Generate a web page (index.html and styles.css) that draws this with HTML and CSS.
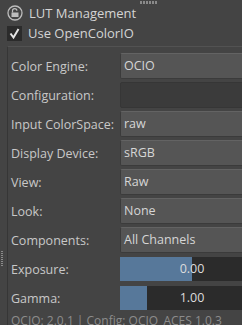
FILE: index.html
```html
<!DOCTYPE html>
<html lang="en">
<head>
    <meta charset="UTF-8">
    <meta name="viewport" content="width=device-width, initial-scale=1.0">
    <title>LUT Management</title>
    <link rel="stylesheet" href="styles.css">
</head>
<body>
    <div class="panel">
        <div class="grip-top"><span></span></div>

        <div class="section-title">
            <svg class="lock" width="16" height="16" viewBox="0 0 16 16">
                <circle cx="8" cy="8" r="7" fill="none" stroke="#bdbdbd" stroke-width="1.3"/>
                <path d="M5.5 7.5 V5.8 A2.2 2.2 0 0 1 9.9 5.8" fill="none" stroke="#bdbdbd" stroke-width="1.2"/>
                <rect x="4.5" y="7.5" width="7" height="4.5" fill="#bdbdbd"/>
            </svg>
            <span>LUT Management</span>
        </div>

        <label class="check-row">
            <span class="checkbox">
                <svg width="15" height="15" viewBox="0 0 15 15">
                    <path d="M3.5 7.5 L6.5 11.5 L11.5 3" fill="none" stroke="#e6e6e6" stroke-width="2"/>
                </svg>
            </span>
            <span>Use OpenColorIO</span>
        </label>

        <div class="frame">
            <div class="grip-side"></div>

            <div class="row">
                <span class="label">Color Engine:</span>
                <div class="field">OCIO</div>
            </div>
            <div class="row">
                <span class="label">Configuration:</span>
                <div class="field empty"></div>
            </div>
            <div class="row">
                <span class="label">Input ColorSpace:</span>
                <div class="field">raw</div>
            </div>
            <div class="row">
                <span class="label">Display Device:</span>
                <div class="field">sRGB</div>
            </div>
            <div class="row">
                <span class="label">View:</span>
                <div class="field">Raw</div>
            </div>
            <div class="row">
                <span class="label">Look:</span>
                <div class="field">None</div>
            </div>
            <div class="row">
                <span class="label">Components:</span>
                <div class="field">All Channels</div>
            </div>
            <div class="row">
                <span class="label">Exposure:</span>
                <div class="slider">
                    <div class="fill" style="width: 50%"></div>
                    <span class="value">0.00</span>
                </div>
            </div>
            <div class="row">
                <span class="label">Gamma:</span>
                <div class="slider">
                    <div class="fill" style="width: 19%"></div>
                    <span class="value">1.00</span>
                </div>
            </div>

            <div class="footer">OCIO: 2.0.1 | Config: OCIO_ACES 1.0.3</div>
        </div>
    </div>
</body>
</html>
```

FILE: styles.css
```css
* {
    margin: 0;
    padding: 0;
    box-sizing: border-box;
}

body {
    font-family: 'Open Sans', sans-serif;
    font-size: 12.5px;
    background: #444444;
    color: #c8c8c8;
    overflow: hidden;
}

.panel {
    display: flex;
    flex-direction: column;
    width: 242px;
    height: 325px;
    overflow: hidden;
}

.grip-top {
    height: 6px;
    padding-left: 140px;
    padding-top: 1px;
}

.grip-top span {
    display: block;
    width: 18px;
    height: 3px;
    background: repeating-linear-gradient(90deg, #8a8a8a 0 2px, transparent 2px 3px);
}

.section-title {
    display: flex;
    align-items: center;
    gap: 6px;
    height: 18px;
    padding-left: 7px;
    font-size: 13px;
    color: #d4d4d4;
}

.check-row {
    display: flex;
    align-items: center;
    gap: 6px;
    height: 19px;
    margin-top: 2px;
    padding-left: 7px;
    font-size: 13px;
    color: #d4d4d4;
}

.checkbox {
    display: flex;
    width: 15px;
    height: 15px;
    background: #2b2b2b;
}

.frame {
    position: relative;
    display: flex;
    flex-direction: column;
    gap: 3px;
    margin-top: 4px;
    margin-left: 7px;
    padding-top: 6px;
    padding-left: 3px;
    border-top: 1px solid #525252;
    border-left: 1px solid #363636;
    flex: 1;
}

.grip-side {
    position: absolute;
    left: -7px;
    top: 204px;
    width: 2px;
    height: 16px;
    background: repeating-linear-gradient(180deg, #8a8a8a 0 1px, transparent 1px 2px);
}

.row {
    display: flex;
    align-items: center;
    height: 26px;
}

.label {
    width: 109px;
    flex-shrink: 0;
    white-space: nowrap;
}

.field {
    width: 144px;
    height: 26px;
    flex-shrink: 0;
    padding-left: 3px;
    line-height: 24px;
    background: #555555;
    border: 1px solid #3b3b3b;
    border-top-color: #636363;
    border-radius: 2px;
    color: #d6d6d6;
}

.field.empty {
    background: #3b3b3b;
    border-color: #363636;
}

.slider {
    position: relative;
    width: 144px;
    height: 24px;
    flex-shrink: 0;
    background: #2b2b2b;
}

.fill {
    height: 100%;
    background: #57789a;
}

.value {
    position: absolute;
    left: 0;
    right: 0;
    top: 0;
    line-height: 24px;
    text-align: center;
    color: #dcdcdc;
}

.footer {
    margin-top: 0;
    font-size: 12px;
    line-height: 14px;
    color: #8c8c8c;
    white-space: nowrap;
}
```
